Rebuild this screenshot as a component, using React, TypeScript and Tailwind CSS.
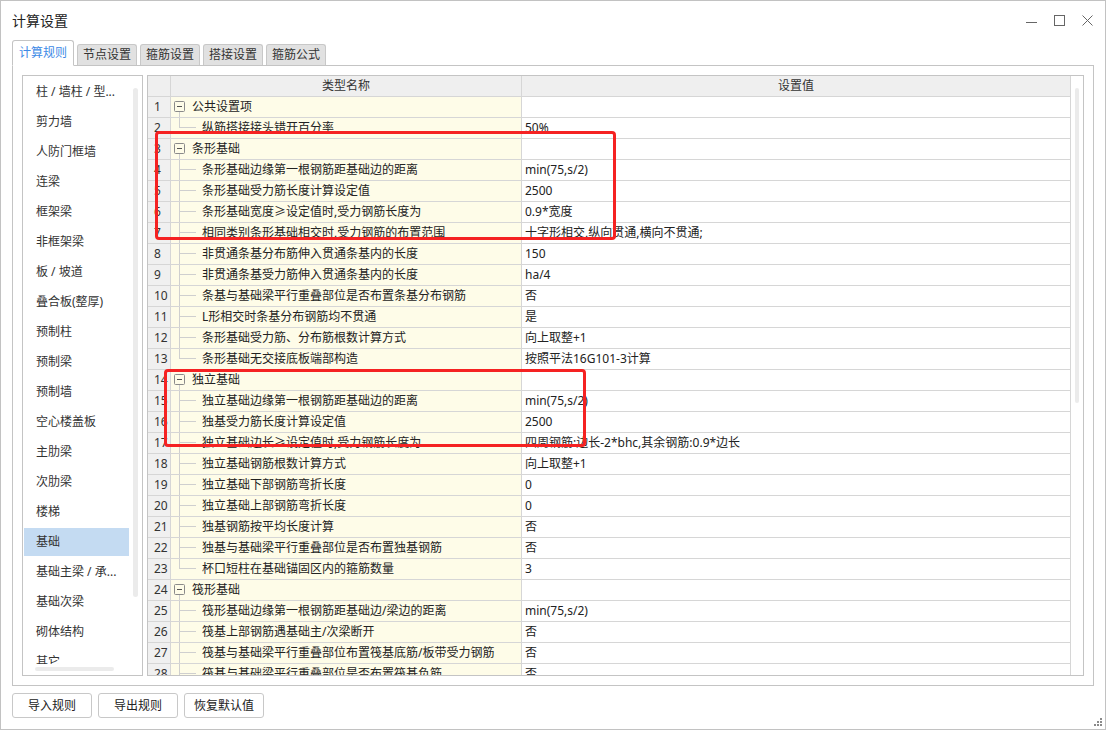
import React from 'react';

type Row = { name: string; value?: string; group?: boolean; last?: boolean };

const ROWS: Row[] = [
  { name: '公共设置项', group: true },
  { name: '纵筋搭接接头错开百分率', value: '50%', last: true },
  { name: '条形基础', group: true },
  { name: '条形基础边缘第一根钢筋距基础边的距离', value: 'min(75,s/2)' },
  { name: '条形基础受力筋长度计算设定值', value: '2500' },
  { name: '条形基础宽度≥设定值时,受力钢筋长度为', value: '0.9*宽度' },
  { name: '相同类别条形基础相交时,受力钢筋的布置范围', value: '十字形相交,纵向贯通,横向不贯通;' },
  { name: '非贯通条基分布筋伸入贯通条基内的长度', value: '150' },
  { name: '非贯通条基受力筋伸入贯通条基内的长度', value: 'ha/4' },
  { name: '条基与基础梁平行重叠部位是否布置条基分布钢筋', value: '否' },
  { name: 'L形相交时条基分布钢筋均不贯通', value: '是' },
  { name: '条形基础受力筋、分布筋根数计算方式', value: '向上取整+1' },
  { name: '条形基础无交接底板端部构造', value: '按照平法16G101-3计算', last: true },
  { name: '独立基础', group: true },
  { name: '独立基础边缘第一根钢筋距基础边的距离', value: 'min(75,s/2)' },
  { name: '独基受力筋长度计算设定值', value: '2500' },
  { name: '独立基础边长≥设定值时,受力钢筋长度为', value: '四周钢筋:边长-2*bhc,其余钢筋:0.9*边长' },
  { name: '独立基础钢筋根数计算方式', value: '向上取整+1' },
  { name: '独立基础下部钢筋弯折长度', value: '0' },
  { name: '独立基础上部钢筋弯折长度', value: '0' },
  { name: '独基钢筋按平均长度计算', value: '否' },
  { name: '独基与基础梁平行重叠部位是否布置独基钢筋', value: '否' },
  { name: '杯口短柱在基础锚固区内的箍筋数量', value: '3', last: true },
  { name: '筏形基础', group: true },
  { name: '筏形基础边缘第一根钢筋距基础边/梁边的距离', value: 'min(75,s/2)' },
  { name: '筏基上部钢筋遇基础主/次梁断开', value: '否' },
  { name: '筏基与基础梁平行重叠部位布置筏基底筋/板带受力钢筋', value: '否' },
  { name: '筏基与基础梁平行重叠部位是否布置筏基负筋', value: '否' },
];

const SIDE_ITEMS = [
  '柱 / 墙柱 / 型...',
  '剪力墙',
  '人防门框墙',
  '连梁',
  '框架梁',
  '非框架梁',
  '板 / 坡道',
  '叠合板(整厚)',
  '预制柱',
  '预制梁',
  '预制墙',
  '空心楼盖板',
  '主肋梁',
  '次肋梁',
  '楼梯',
  '基础',
  '基础主梁 / 承...',
  '基础次梁',
  '砌体结构',
  '其它',
];

const TABS = ['计算规则', '节点设置', '箍筋设置', '搭接设置', '箍筋公式'];

const FONT = { fontFamily: '"Noto Sans", "Noto Sans CJK SC", sans-serif' };

const TreeMark: React.FC<{ row: Row }> = ({ row }) => {
  if (row.group) {
    return (
      <svg width="21" height="20" className="shrink-0">
        <rect x="3.5" y="4.5" width="10" height="10" rx="1" fill="none" stroke="#8a8a8a" />
        <line x1="6" y1="9.5" x2="11" y2="9.5" stroke="#555" />
        <line x1="8.5" y1="15" x2="8.5" y2="20" stroke="#cfcfcf" />
      </svg>
    );
  }
  return (
    <svg width="31" height="20" className="shrink-0">
      <line x1="8.5" y1="0" x2="8.5" y2={row.last ? 10 : 20} stroke="#cfcfcf" />
      <line x1="8.5" y1="9.5" x2="25" y2="9.5" stroke="#cfcfcf" />
    </svg>
  );
};

export default function App() {
  return (
    <div
      className="relative w-[1106px] h-[730px] bg-white border border-[#c2c2c2] flex flex-col text-[#333]"
      style={FONT}
    >
      {/* title bar */}
      <div className="h-[39px] flex items-center justify-between pl-[11px] pr-[12px]">
        <span className="text-[14px] text-[#222]">计算设置</span>
        <div className="flex items-center gap-[17px]">
          <svg width="11" height="11">
            <line x1="0" y1="7.5" x2="11" y2="7.5" stroke="#666" />
          </svg>
          <svg width="11" height="11">
            <rect x="0.5" y="0.5" width="10" height="10" fill="none" stroke="#666" />
          </svg>
          <svg width="11" height="11">
            <line x1="0.5" y1="0.5" x2="10.5" y2="10.5" stroke="#666" />
            <line x1="10.5" y1="0.5" x2="0.5" y2="10.5" stroke="#666" />
          </svg>
        </div>
      </div>

      {/* tabs */}
      <div className="relative z-10 h-[25px] ml-[11px] flex items-end gap-[3px]">
        {TABS.map((t, i) =>
          i === 0 ? (
            <div
              key={t}
              className="h-[26px] -mb-px w-[62px] flex items-center justify-center bg-white border border-[#c4c4c4] border-b-white rounded-t-[3px] text-[12px] text-[#3d8ae6]"
            >
              {t}
            </div>
          ) : (
            <div
              key={t}
              className="h-[21px] w-[60px] flex items-center justify-center bg-[#e1e1e1] border border-[#c8c8c8] border-b-0 rounded-t-[3px] text-[12px] text-[#333]"
            >
              {t}
            </div>
          ),
        )}
      </div>

      {/* tab panel */}
      <div className="ml-[11px] w-[1082px] h-[621px] border border-[#c4c4c4] p-[9px] flex gap-[4px]">
        {/* sidebar */}
        <div className="w-[121px] h-[601px] border border-[#c4c4c4] flex flex-col">
          <div className="h-[588px] flex overflow-hidden">
            <div className="w-[106px] pl-px pt-px">
              {SIDE_ITEMS.map((s) => (
                <div key={s} className="h-[30px] py-px">
                  <div
                    className={
                      'h-[28px] flex items-center pl-[12px] text-[12px] whitespace-nowrap ' +
                      (s === '基础' ? 'bg-[#c4dbf2]' : '')
                    }
                  >
                    {s}
                  </div>
                </div>
              ))}
            </div>
            <div className="ml-[4px] pt-[12px]">
              <div className="w-[5px] h-[509px] rounded-full bg-[#ebebeb]" />
            </div>
          </div>
          <div className="flex-1 pl-[12px] pt-[3px]">
            <div className="w-[79px] h-[4px] rounded-full bg-[#ebebeb]" />
          </div>
        </div>

        {/* table */}
        <div className="w-[937px] h-[601px] border border-[#c4c4c4] flex">
          <div className="w-[923px] h-full overflow-hidden">
            <div className="h-[21px] flex bg-[#efefef] border-b border-[#d6d6d6] text-[12px]">
              <div className="w-[23px] border-r border-[#d6d6d6]" />
              <div className="w-[351px] border-r border-[#d6d6d6] flex items-center justify-center">
                类型名称
              </div>
              <div className="w-[549px] border-r border-[#d6d6d6] flex items-center justify-center">
                设置值
              </div>
            </div>
            {ROWS.map((r, i) => (
              <div key={i} className="h-[21px] flex border-b border-[#d6d6d6] text-[12px]">
                <div className="w-[23px] bg-[#f0f0f0] border-r border-[#d6d6d6] flex items-center pl-[6px]">
                  {i + 1}
                </div>
                <div className="w-[351px] bg-[#fefce8] border-r border-[#d6d6d6] flex items-center whitespace-nowrap overflow-hidden">
                  <TreeMark row={r} />
                  <span className="text-[#222]">{r.name}</span>
                </div>
                <div className="w-[549px] border-r border-[#d6d6d6] flex items-center pl-[3px] whitespace-nowrap text-[#222]">
                  {r.value}
                </div>
              </div>
            ))}
          </div>
          <div className="w-[12px] pt-[12px] pl-[4px]">
            <div className="w-[4px] h-[315px] rounded-full bg-[#ebebeb]" />
          </div>
        </div>
      </div>

      {/* buttons */}
      <div className="ml-[11px] mt-[7px] flex gap-[6px]">
        {['导入规则', '导出规则', '恢复默认值'].map((b) => (
          <div
            key={b}
            className="w-[80px] h-[25px] border border-[#c8c8c8] rounded-[3px] flex items-center justify-center text-[12px] text-[#222]"
          >
            {b}
          </div>
        ))}
      </div>

      {/* resize grip */}
      <svg className="absolute right-[3px] bottom-[3px]" width="9" height="9">
        <rect x="7" y="1" width="2" height="2" fill="#8a8a8a" />
        <rect x="4" y="4" width="2" height="2" fill="#8a8a8a" />
        <rect x="7" y="4" width="2" height="2" fill="#8a8a8a" />
        <rect x="1" y="7" width="2" height="2" fill="#8a8a8a" />
        <rect x="4" y="7" width="2" height="2" fill="#8a8a8a" />
        <rect x="7" y="7" width="2" height="2" fill="#8a8a8a" />
      </svg>

      {/* red annotation boxes */}
      <div className="absolute left-[154px] top-[130px] w-[461px] h-[109px] border-[3px] border-[#f52222] rounded-[4px]" />
      <div className="absolute left-[163px] top-[368px] w-[422px] h-[78px] border-[3px] border-[#f52222] rounded-[4px]" />
    </div>
  );
}
